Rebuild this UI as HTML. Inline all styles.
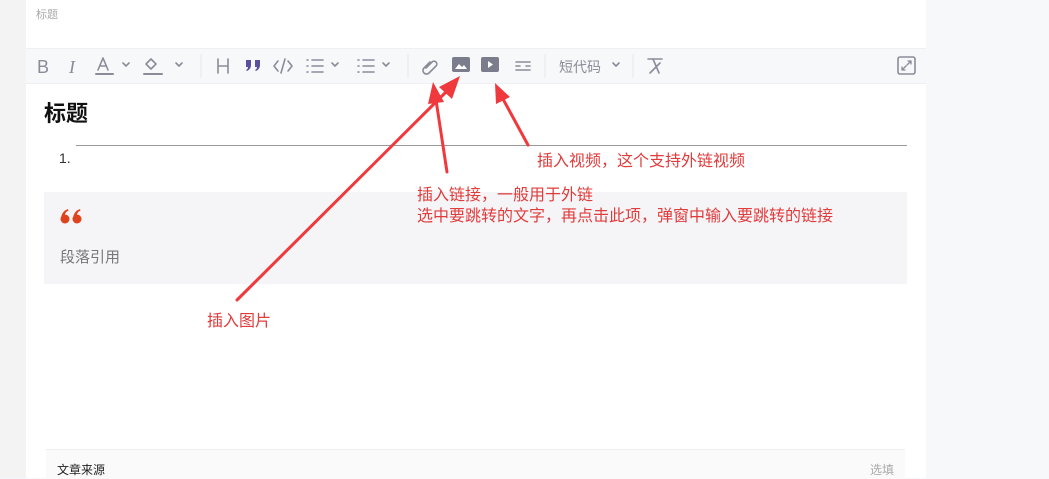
<!DOCTYPE html>
<html><head><meta charset="utf-8"><style>
body{margin:0;width:1049px;height:478px;overflow:hidden;background:#f7f8fa;font-family:"Liberation Sans","Noto Sans CJK SC",sans-serif;position:relative}
.a{position:absolute}
.red{color:#e03c3c;font-size:16px}
</style></head><body>
<div class="a" style="left:0;top:0;width:26px;height:478px;background:#f3f3f4"></div>
<div class="a" style="left:26px;top:0;width:900px;height:478px;background:#fff"></div>
<div class="a" style="left:36px;top:6px;font-size:11px;color:#aaa">标题</div>
<div class="a" style="left:26px;top:48px;width:900px;height:36px;background:#f7f8fa;border-top:1px solid #eef0f3;border-bottom:1px solid #eef0f3;box-sizing:border-box"></div>
<svg class="a" style="left:26px;top:48px" width="900" height="36" viewBox="0 0 900 36">
<g fill="none" stroke="#8a8c99" stroke-width="1.6" stroke-linecap="round" stroke-linejoin="round">
<text x="11" y="25" font-size="18" fill="#8a8c99" stroke="none" font-family="Liberation Sans">B</text>
<text x="43" y="25" font-size="18" fill="#8a8c99" stroke="none" font-style="italic" font-family="Liberation Serif">I</text>
<path d="M72 22 L77 10 L82 22 M74 18 H80"/><path d="M70 26 H87" stroke-width="2"/>
<path d="M97 15 l3 3 3-3"/>
<path d="M120 16 l5-5 5 5-5 5z"/><path d="M118 26 H136" stroke-width="2"/>
<path d="M150 15 l3 3 3-3"/>
<path d="M192 11 V25 M202 11 V25 M192 18 H202"/>
<path d="M252 13 l-4 5 4 5 M262 13 l4 5-4 5 M259 11 l-4 14"/>
<path d="M286 12 H297 M286 18 H297 M286 24 H297 M281 12 h1 M281 18 h1 M281 24 h1"/>
<path d="M306 15 l3 3 3-3"/>
<path d="M337 12 H348 M337 18 H348 M337 24 H348 M332 12 h1 M332 18 h1 M332 24 h1"/>
<path d="M357 15 l3 3 3-3"/>
<path d="M400 20 l6-6 a2.5 2.5 0 0 1 4 4 l-7 7 a3.5 3.5 0 0 1 -5-5 l6-6"/>
<path d="M490 14 H504 M490 18 h4 M500 18 h4 M490 22 H504"/>
<path d="M587 15 l3 3 3-3"/>
<path d="M622 11 H636 M627 11 l6 14 M624 25 l10-10"/>
<rect x="872" y="9" width="17" height="17" rx="2"/>
<path d="M876 22 l4-4 M876 19 v3 h3 M885 13 l-4 4 M882 13 h3 v3" stroke-width="1.3"/>
</g>
<path d="M220 12 h5 v5 q0 4-4 6 l-1-1 q2-1 2-3 h-2z M229 12 h5 v5 q0 4-4 6 l-1-1 q2-1 2-3 h-2z" fill="#5b4fa0"/>
<rect x="426" y="9" width="18" height="15" rx="2" fill="#7b7d8c"/>
<path d="M429 21 l4-5 3 3 2-2 3 4z" fill="#fff"/>
<rect x="455" y="9" width="18" height="15" rx="2" fill="#7b7d8c"/>
<path d="M462 13 v7 l5-3.5z" fill="#fff"/>
<path d="M175 6 V30 M382 6 V30 M519 6 V30 M607 6 V30" stroke="#e6e7eb"/>
<text x="533" y="24" font-size="14" fill="#8a8c99" font-family="Noto Sans CJK SC">短代码</text>
</svg>
<div class="a" style="left:44px;top:96px;font-size:22px;font-weight:bold;color:#111">标题</div>
<div class="a" style="left:59px;top:150px;font-size:14px;color:#333">1.</div>
<div class="a" style="left:76px;top:145px;width:831px;height:1px;background:#999"></div>
<div class="a" style="left:44px;top:192px;width:863px;height:92px;background:#f5f5f7"></div>
<svg class="a" style="left:59px;top:207px" width="28" height="18">
<g fill="#e0421e">
<circle cx="6" cy="12" r="4.5"/><path d="M2 11 Q3 4 9 2 L9.5 3.5 Q6 5 5.5 9z"/>
<circle cx="18" cy="12" r="4.5"/><path d="M14 11 Q15 4 21 2 L21.5 3.5 Q18 5 17.5 9z"/>
</g></svg>
<div class="a" style="left:60px;top:246px;font-size:15px;color:#777">段落引用</div>
<div class="a" style="left:46px;top:449px;width:859px;height:29px;background:#fafafa;border-top:1px solid #eee"></div>
<div class="a" style="left:57px;top:461px;font-size:12px;color:#222">文章来源</div>
<div class="a" style="left:870px;top:461px;font-size:12px;color:#aaa">选填</div>
<div class="a red" style="left:537px;top:147px">插入视频，这个支持外链视频</div>
<div class="a red" style="left:417px;top:185px;line-height:21px">插入链接，一般用于外链<br>选中要跳转的文字，再点击此项，弹窗中输入要跳转的链接</div>
<div class="a red" style="left:207px;top:307px">插入图片</div>
<svg class="a" style="left:0;top:0" width="1049" height="478">
<g stroke="#f0393c" stroke-width="3" stroke-linecap="round">
<line x1="447" y1="172" x2="436" y2="100"/>
<line x1="237" y1="300" x2="446" y2="92"/>
<line x1="528" y1="145" x2="503" y2="99"/>
</g>
<g fill="#f0393c">
<polygon points="433,82 428,104 444,102"/>
<polygon points="460,76 439,87 452,99"/>
<polygon points="495,83 496,104 510,97"/>
</g>
</svg>
</body></html>
